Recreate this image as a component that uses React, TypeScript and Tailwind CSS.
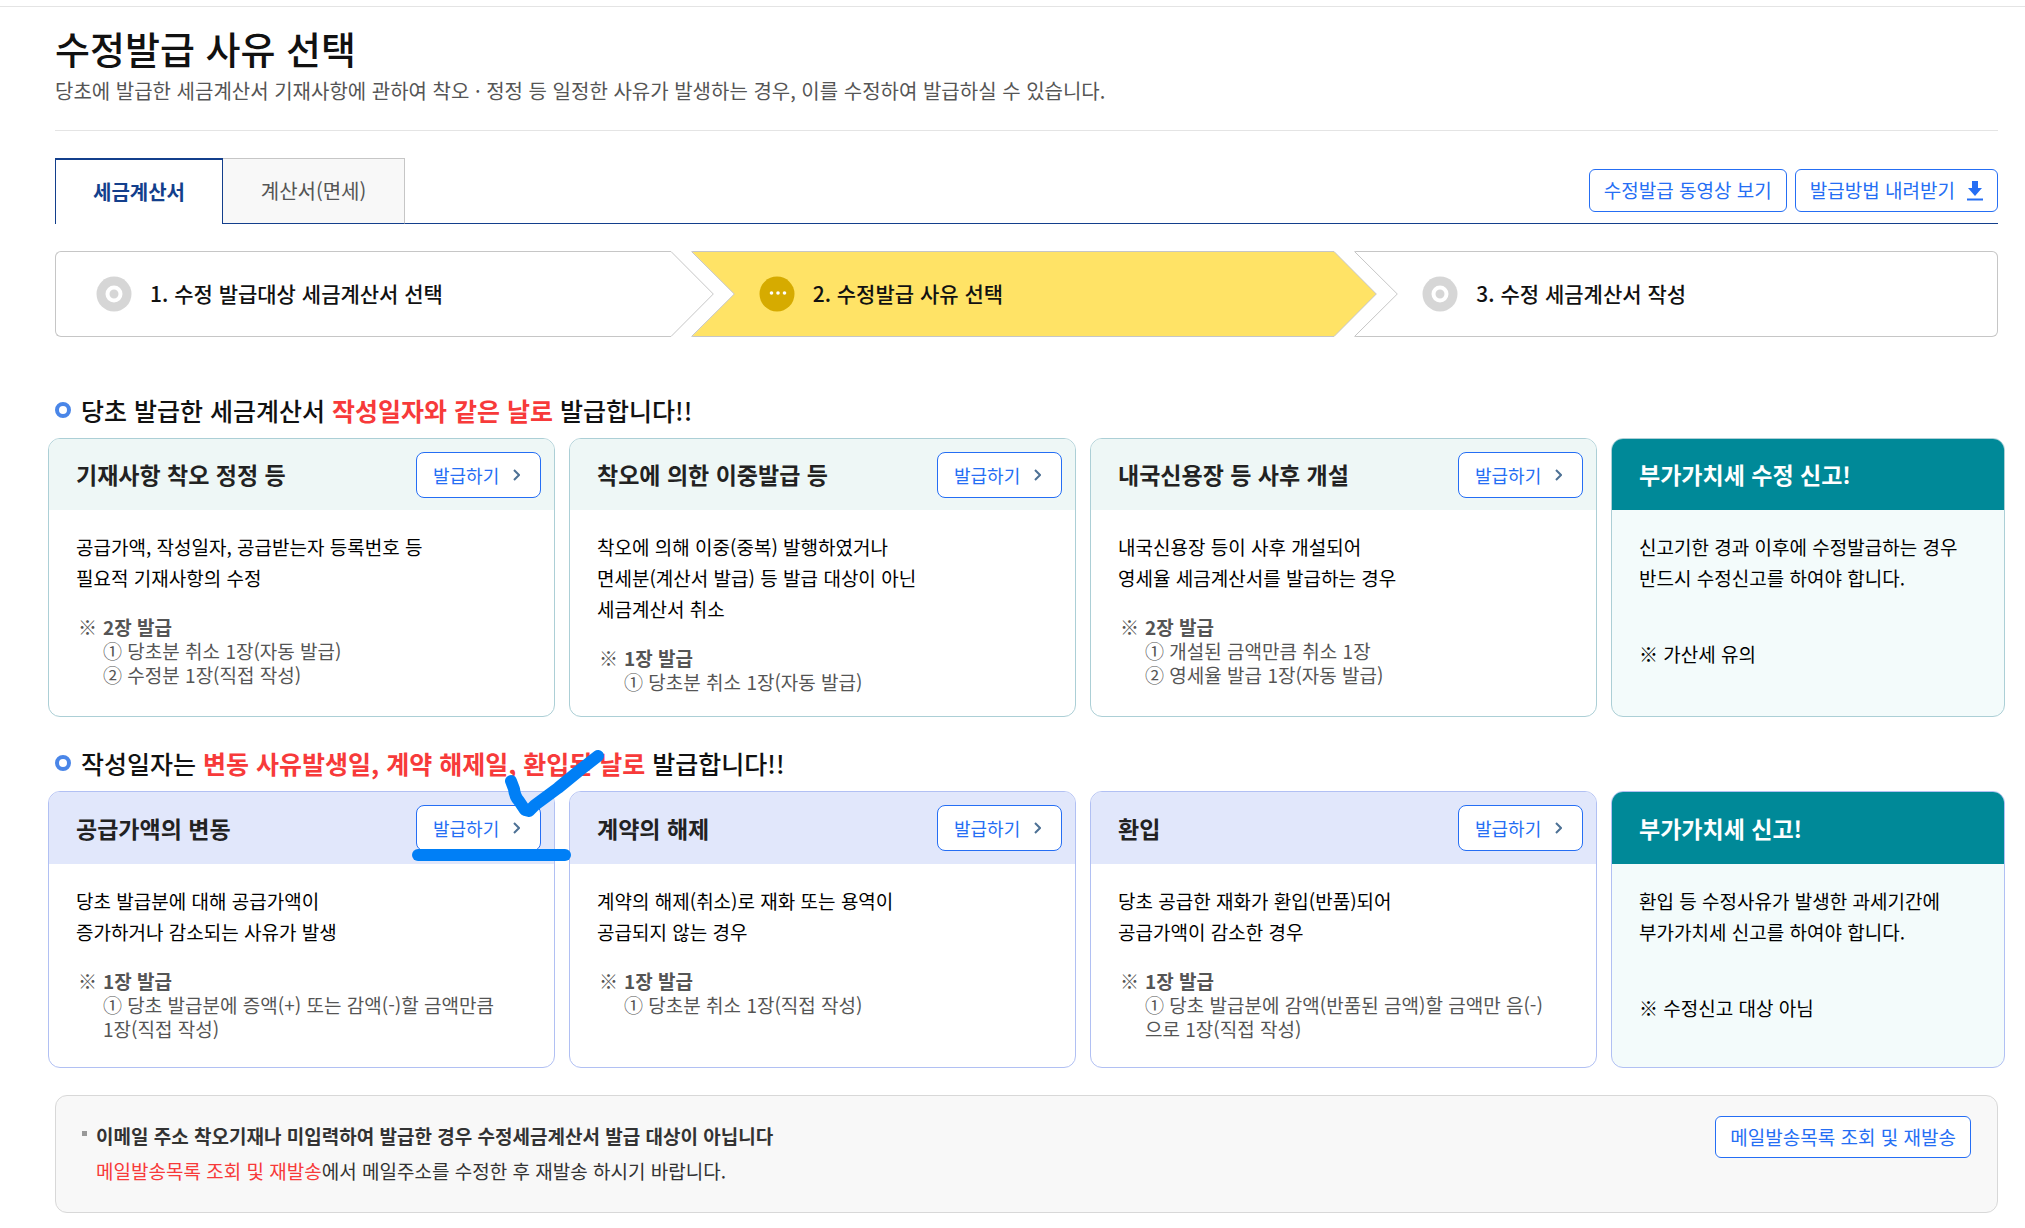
import type { ReactNode } from "react";

type Tone = "teal" | "indigo";

interface Reason {
  title: string;
  lines: string[];
  count: string;
  notes: string[];
  marked?: boolean;
}

interface Notice {
  title: string;
  lines: string[];
  remark: string;
}

const sameDayReasons: Reason[] = [
  {
    title: "기재사항 착오 정정 등",
    lines: ["공급가액, 작성일자, 공급받는자 등록번호 등", "필요적 기재사항의 수정"],
    count: "2장 발급",
    notes: ["① 당초분 취소 1장(자동 발급)", "② 수정분 1장(직접 작성)"],
  },
  {
    title: "착오에 의한 이중발급 등",
    lines: ["착오에 의해 이중(중복) 발행하였거나", "면세분(계산서 발급) 등 발급 대상이 아닌", "세금계산서 취소"],
    count: "1장 발급",
    notes: ["① 당초분 취소 1장(자동 발급)"],
  },
  {
    title: "내국신용장 등 사후 개설",
    lines: ["내국신용장 등이 사후 개설되어", "영세율 세금계산서를 발급하는 경우"],
    count: "2장 발급",
    notes: ["① 개설된 금액만큼 취소 1장", "② 영세율 발급 1장(자동 발급)"],
  },
];

const changedDayReasons: Reason[] = [
  {
    title: "공급가액의 변동",
    lines: ["당초 발급분에 대해 공급가액이", "증가하거나 감소되는 사유가 발생"],
    count: "1장 발급",
    notes: ["① 당초 발급분에 증액(+) 또는 감액(-)할 금액만큼", "1장(직접 작성)"],
    marked: true,
  },
  {
    title: "계약의 해제",
    lines: ["계약의 해제(취소)로 재화 또는 용역이", "공급되지 않는 경우"],
    count: "1장 발급",
    notes: ["① 당초분 취소 1장(직접 작성)"],
  },
  {
    title: "환입",
    lines: ["당초 공급한 재화가 환입(반품)되어", "공급가액이 감소한 경우"],
    count: "1장 발급",
    notes: ["① 당초 발급분에 감액(반품된 금액)할 금액만 음(-)", "으로 1장(직접 작성)"],
  },
];

function RingIcon() {
  return (
    <svg viewBox="0 0 36 36" className="size-9 shrink-0" aria-hidden="true">
      <circle cx="18" cy="18" r="17.5" fill="#d6d6d6" />
      <circle cx="18" cy="18" r="6.5" fill="none" stroke="#fff" strokeWidth="4" />
    </svg>
  );
}

function DotsIcon() {
  return (
    <svg viewBox="0 0 36 36" className="size-9 shrink-0" aria-hidden="true">
      <circle cx="18" cy="18" r="17.5" fill="#d6ab00" />
      <circle cx="12.500" cy="17" r="1.8" fill="#fff" />
      <circle cx="19" cy="17" r="1.8" fill="#fff" />
      <circle cx="25.500" cy="17" r="1.8" fill="#fff" />
    </svg>
  );
}

function ArrowHead({ fill }: { fill: string }) {
  return (
    <svg viewBox="0 0 44 86" className="absolute -top-px -right-[43px] z-10 h-[86px] w-11" aria-hidden="true">
      <path d="M0 .5h1L43.300 43 1 85.500H0z" fill={fill} />
      <path d="M0 .5h1L43.300 43 1 85.500H0" fill="none" stroke="#c6c6c6" />
    </svg>
  );
}

function Notch() {
  return (
    <svg viewBox="0 0 44 86" className="absolute -top-px left-0 h-[86px] w-11" aria-hidden="true">
      <path d="M0 0h.5L43.300 43 .5 86H0z" fill="#fff" />
      <path d="M.5 .5 43.300 43 .5 85.500" fill="none" stroke="#c6c6c6" />
    </svg>
  );
}

function SectionTitle({ children }: { children: ReactNode }) {
  return (
    <h2 className="flex items-center gap-2.5 pl-[7px] text-[25px] leading-9 font-medium text-[#111]">
      <svg viewBox="0 0 16 16" className="size-4" aria-hidden="true">
        <circle cx="8" cy="8" r="6" fill="none" stroke="#4a86e8" strokeWidth="4" />
      </svg>
      <span>{children}</span>
    </h2>
  );
}

function HandMark() {
  return (
    <svg
      viewBox="0 0 206 120"
      className="pointer-events-none absolute -top-[46px] -right-[56px] z-10 h-[120px] w-[206px]"
      fill="none"
      stroke="#007ff6"
      strokeWidth="12"
      strokeLinecap="round"
      strokeLinejoin="round"
      aria-hidden="true"
    >
      <path d="M107 35 110 43Q111 51 115 55L119 61 121 64 125 65 131 59 154 42 176 24 194 10" />
      <path d="M14 109H161" />
    </svg>
  );
}

function ReasonCard({ reason, tone }: { reason: Reason; tone: Tone }) {
  return (
    <article
      className={
        tone === "teal"
          ? "relative rounded-xl border border-[#accfd6] bg-white"
          : "relative rounded-xl border border-[#b1c0f3] bg-white"
      }
    >
      <header
        className={
          tone === "teal"
            ? "flex h-[71px] items-center justify-between rounded-t-[11px] bg-[#eef7f6] pr-[13px] pl-[27px]"
            : "flex h-[72px] items-center justify-between rounded-t-[11px] bg-[#e1e7fb] pr-[13px] pl-[27px]"
        }
      >
        <h3 className="text-[23px] font-bold text-[#222]">{reason.title}</h3>
        <button
          type="button"
          className="flex h-[46px] w-[125px] items-center justify-between rounded-lg border border-[#256ef4] bg-white pr-5 pl-4 text-lg text-[#256ef4]"
        >
          발급하기
          <svg viewBox="0 0 7 12" className="h-3 w-[7px]" fill="none" stroke="#4d7195" strokeWidth="2" aria-hidden="true">
            <path d="M1 1 6 6 1 11" />
          </svg>
        </button>
      </header>
      <div className="px-[27px] pt-[21px] pb-5">
        <p className="text-[19px] leading-[31px] text-black">
          {reason.lines.map((line) => (
            <span key={line} className="block whitespace-nowrap">
              {line}
            </span>
          ))}
        </p>
        <div className="mt-[22px] flex gap-1.5 pl-0.5 text-[19px] leading-6 text-[#555]">
          <span>※</span>
          <div className="whitespace-nowrap">
            <strong className="block font-bold">{reason.count}</strong>
            {reason.notes.map((note) => (
              <span key={note} className="block">
                {note}
              </span>
            ))}
          </div>
        </div>
      </div>
      {reason.marked && <HandMark />}
    </article>
  );
}

function NoticeCard({ notice, tone }: { notice: Notice; tone: Tone }) {
  return (
    <article
      className={
        tone === "teal"
          ? "overflow-hidden rounded-xl border border-[#accfd6] bg-[#f3fbfb]"
          : "overflow-hidden rounded-xl border border-[#b1c0f3] bg-[#f3fbfb]"
      }
    >
      <header
        className={
          tone === "teal"
            ? "flex h-[71px] items-center bg-[#008998] px-[27px]"
            : "flex h-[72px] items-center bg-[#008998] px-[27px]"
        }
      >
        <h3 className="text-[23px] font-bold text-white">{notice.title}</h3>
      </header>
      <div className="px-[27px] pt-[21px] text-[19px] leading-[31px] whitespace-nowrap text-black">
        {notice.lines.map((line) => (
          <p key={line}>{line}</p>
        ))}
        <p className="mt-[45px]">※ {notice.remark}</p>
      </div>
    </article>
  );
}

function CardRow({ reasons, notice, tone }: { reasons: Reason[]; notice: Notice; tone: Tone }) {
  return (
    <div
      className={
        tone === "teal"
          ? "mt-2.5 grid min-h-[279px] grid-cols-[507fr_507fr_507fr_394fr] gap-[14px]"
          : "mt-2.5 grid min-h-[277px] grid-cols-[507fr_507fr_507fr_394fr] gap-[14px]"
      }
    >
      {reasons.map((reason) => (
        <ReasonCard key={reason.title} reason={reason} tone={tone} />
      ))}
      <NoticeCard notice={notice} tone={tone} />
    </div>
  );
}

export default function App() {
  return (
    <div
      lang="ko"
      className="mt-1.5 border-t border-[#e4e4e4] bg-white pt-[15px] pr-5 pb-3 pl-12 font-['Noto_Sans_CJK_KR','Noto_Sans_CJK_SC',sans-serif]"
    >
      <div className="px-[7px]">
        <header className="border-b border-[#e4e4e4] pb-[25px]">
          <h1 className="text-[38px] leading-[52px] font-medium text-[#111]">수정발급 사유 선택</h1>
          <p className="mt-[3px] text-xl leading-7 text-[#555]">
            당초에 발급한 세금계산서 기재사항에 관하여 착오 · 정정 등 일정한 사유가 발생하는 경우, 이를 수정하여 발급하실 수 있습니다.
          </p>
        </header>

        <div className="mt-[27px] flex items-start justify-between border-b border-[#133f8c]">
          <div role="tablist" className="-mb-px flex text-xl">
            <button
              type="button"
              role="tab"
              aria-selected="true"
              className="h-[66px] w-[168px] border-x border-t-2 border-[#133f8c] bg-white font-bold text-[#133f8c]"
            >
              세금계산서
            </button>
            <button
              type="button"
              role="tab"
              aria-selected="false"
              className="h-[66px] w-[182px] border-t border-r border-b border-t-[#c6c6c6] border-r-[#c6c6c6] border-b-[#133f8c] bg-[#f8f8f8] text-[#555]"
            >
              계산서(면세)
            </button>
          </div>
          <div className="mt-[11px] flex gap-2 text-[19px] text-[#256ef4]">
            <button type="button" className="h-[43px] rounded-md border border-[#256ef4] bg-white px-[14px]">
              수정발급 동영상 보기
            </button>
            <button
              type="button"
              className="flex h-[43px] items-center gap-3 rounded-md border border-[#256ef4] bg-white px-[14px]"
            >
              발급방법 내려받기
              <svg viewBox="0 0 16 20" className="h-5 w-4" fill="#256ef4" aria-hidden="true">
                <path d="M5 0h6v7h4L8 15 1 7h4zM0 17.500h16v2H0z" />
              </svg>
            </button>
          </div>
        </div>

        <ol className="mt-[27px] grid h-[86px] grid-cols-[616fr_644fr_644fr] gap-5 text-[21px] font-medium text-[#111]">
          <li className="relative flex items-center gap-[18px] rounded-l-md border-y border-l border-[#c6c6c6] pl-10">
            <RingIcon />
            1. 수정 발급대상 세금계산서 선택
            <ArrowHead fill="#fff" />
          </li>
          <li
            aria-current="step"
            className="relative flex items-center gap-[18px] border-y border-[#c6c6c6] bg-[#ffe366] pl-[68px]"
          >
            <Notch />
            <DotsIcon />
            2. 수정발급 사유 선택
            <ArrowHead fill="#ffe366" />
          </li>
          <li className="relative flex items-center gap-[18px] rounded-r-md border-y border-r border-[#c6c6c6] pl-[68px]">
            <Notch />
            <RingIcon />
            3. 수정 세금계산서 작성
          </li>
        </ol>
      </div>

      <section className="mt-[55px]">
        <SectionTitle>
          당초 발급한 세금계산서 <strong className="font-bold text-[#f73a3a]">작성일자와 같은 날로</strong> 발급합니다!!
        </SectionTitle>
        <CardRow
          tone="teal"
          reasons={sameDayReasons}
          notice={{
            title: "부가가치세 수정 신고!",
            lines: ["신고기한 경과 이후에 수정발급하는 경우", "반드시 수정신고를 하여야 합니다."],
            remark: "가산세 유의",
          }}
        />
      </section>

      <section className="mt-7">
        <SectionTitle>
          작성일자는 <strong className="font-bold text-[#f73a3a]">변동 사유발생일, 계약 해제일, 환입된 날로</strong> 발급합니다!!
        </SectionTitle>
        <CardRow
          tone="indigo"
          reasons={changedDayReasons}
          notice={{
            title: "부가가치세 신고!",
            lines: ["환입 등 수정사유가 발생한 과세기간에", "부가가치세 신고를 하여야 합니다."],
            remark: "수정신고 대상 아님",
          }}
        />
      </section>

      <footer className="mx-[7px] mt-[27px] flex h-[118px] items-start justify-between rounded-xl border border-[#d8d8d8] bg-[#f8f8f8] px-[26px] pt-5 text-[19px]">
        <div className="flex gap-[9px] leading-[35px] text-[#333]">
          <span className="mt-[15px] size-[5px] bg-[#999]" />
          <div className="pt-0.5">
            <p className="font-bold">이메일 주소 착오기재나 미입력하여 발급한 경우 수정세금계산서 발급 대상이 아닙니다</p>
            <p>
              <span className="text-[#f73a3a]">메일발송목록 조회 및 재발송</span>에서 메일주소를 수정한 후 재발송 하시기 바랍니다.
            </p>
          </div>
        </div>
        <button type="button" className="h-[42px] rounded-md border border-[#256ef4] bg-white px-[14px] text-[#256ef4]">
          메일발송목록 조회 및 재발송
        </button>
      </footer>
    </div>
  );
}
